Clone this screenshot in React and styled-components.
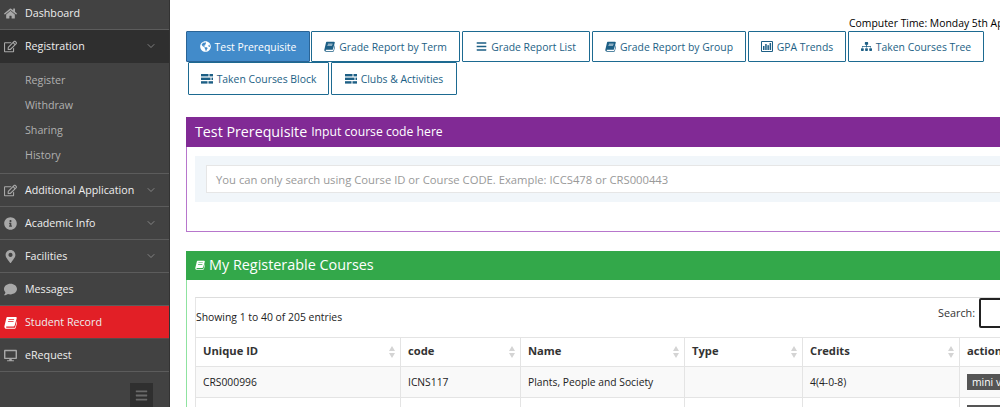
import React from 'react';
import styled, { createGlobalStyle } from 'styled-components';
import {
  FaHome, FaRegEdit, FaInfoCircle, FaMapMarkerAlt, FaComment, FaDesktop, FaGlobeAmericas,
  FaBars, FaSitemap,
} from 'react-icons/fa';
import { LuChevronDown } from 'react-icons/lu';

const Global = createGlobalStyle`
  html, body { margin: 0; padding: 0; height: 407px; overflow: hidden; background: #fff; }
  body { font-family: "Open Sans", "Noto Sans", sans-serif; }
  * { box-sizing: border-box; }
`;

const Page = styled.div`
  display: flex;
  width: 1000px;
  height: 407px;
  overflow: hidden;
`;

const Sidebar = styled.nav`
  position: relative;
  flex: 0 0 170px;
  height: 407px;
  background: #424242;
  border-right: 1px solid #333;
  overflow: hidden;
`;

const NavRow = styled.div`
  display: flex;
  align-items: center;
  height: 33px;
  padding: 0 12px 0 3px;
  font-size: 10.7px;
  color: #eee;
  background: ${p => (p.$bg === 'dark' ? '#2f2f2f' : p.$bg === 'red' ? '#e21f26' : 'transparent')};
  border-bottom: 1px solid ${p => (p.$bg === 'dark' ? '#2f2f2f' : p.$bg === 'red' ? '#5a4a4a' : '#5c5c5c')};
  &:first-child { height: 30px; padding-bottom: 3px; }
`;

const NavIcon = styled.span`
  display: flex;
  flex: none;
  justify-content: center;
  width: 15px;
  margin-right: 7px;
  font-size: 13px;
  color: ${p => (p.$white ? '#fff' : '#a8a8a8')};
`;

const NavLabel = styled.span`
  flex: 1;
  white-space: nowrap;
`;

const Caret = styled(LuChevronDown)`
  flex: none;
  font-size: 12px;
  color: #9a9a9a;
  stroke-width: 1.5;
`;

const SubMenu = styled.div`
  padding: 5px 0;
  border-bottom: 1px solid #5c5c5c;
`;

const SubItem = styled.div`
  height: 25px;
  line-height: 25px;
  padding-left: 25px;
  font-size: 10.7px;
  color: #b0b0b0;
`;

const Toggle = styled.div`
  position: absolute;
  left: 130px;
  top: 383px;
  width: 23px;
  height: 24px;
  display: flex;
  align-items: center;
  justify-content: center;
  background: #2f2f2f;
  color: #6a6a6a;
  font-size: 13px;
`;

const Main = styled.main`
  flex: 1;
  min-width: 0;
  padding-left: 16px;
  overflow: hidden;
`;

const TimeLine = styled.div`
  height: 31px;
  padding: 16px 0 0 663px;
  font-size: 10.4px;
  line-height: 15px;
  color: #000;
  white-space: nowrap;
`;

const Tabs = styled.div`
  display: flex;
  flex-wrap: wrap;
  width: 800px;
  padding-left: 2px;
  column-gap: 2px;
  height: 64px;
  align-content: flex-start;
`;

const Tab = styled.div`
  display: flex;
  align-items: center;
  justify-content: center;
  width: ${p => p.$w}px;
  height: ${p => (p.$low ? 33 : 31)}px;
  margin-left: ${p => (p.$active ? -2 : 0)}px;
  margin-right: ${p => (p.$active ? -1 : 0)}px;
  border: 1px solid ${p => (p.$active ? '#2a6496' : '#1d6a91')};
  border-radius: 1px;
  background: ${p => (p.$active ? '#428bca' : '#fff')};
  color: ${p => (p.$active ? '#fff' : '#1d5f85')};
  font-size: 10.4px;
  white-space: nowrap;
  svg { margin-right: 4px; font-size: 11px; }
`;

const Panel = styled.section`
  width: 830px;
  margin-top: ${p => p.$top}px;
  height: ${p => p.$h}px;
  border: 1px solid ${p => p.$border};
  border-width: 0 0 ${p => (p.$closed ? 1 : 0)}px 1px;
`;

const PanelHead = styled.header`
  display: flex;
  align-items: center;
  height: ${p => p.$h}px;
  margin-left: -1px;
  padding: 0 0 2px 9px;
  background: ${p => p.$bg};
  color: #fff;
  font-size: ${p => p.$size}px;
  white-space: nowrap;
  small { margin-left: 4px; font-size: 12.2px; }
  svg { margin-right: 4px; }
`;

const SearchBand = styled.div`
  margin: 9px 0 0 8px;
  height: 46px;
  padding: 9px 11px;
  background: #f1f6fa;
`;

const SearchInput = styled.div`
  height: 28px;
  line-height: 27px;
  padding-left: 9px;
  background: #fff;
  border: 1px solid #e6e6e6;
  font-size: 11.25px;
  color: #999;
  white-space: nowrap;
`;

const TableBox = styled.div`
  margin: 17px 0 0 8px;
  border-top: 1px solid #ddd;
  border-left: 1px solid #e6e6e6;
  width: 860px;
`;

const TableTools = styled.div`
  display: flex;
  height: 39px;
  font-size: 10.4px;
  color: #222;
`;

const Showing = styled.div`
  width: 742px;
  padding-top: 12px;
  line-height: 15px;
`;

const SearchLabel = styled.label`
  display: flex;
  align-items: flex-start;
  line-height: 30px;
  font-size: 10.8px;
  color: #333;
  i {
    width: 40px;
    height: 30px;
    margin-left: 4px;
    border: 2px solid #222;
    border-radius: 2px;
  }
`;

const Table = styled.table`
  table-layout: fixed;
  border-collapse: collapse;
  width: 864px;
  margin-left: -1px;
  font-size: 10.3px;
  color: #222;
`;

const Th = styled.th`
  position: relative;
  width: ${p => p.$w}px;
  height: 29px;
  padding: 0 7px 3px;
  text-align: left;
  font-size: 11.2px;
  font-weight: 700;
  color: #333;
  border: 1px solid #e4e4e4;
`;

const Sort = styled.span`
  position: absolute;
  right: 5px;
  top: 8px;
  display: flex;
  flex-direction: column;
  gap: 2px;
  &::before, &::after {
    content: '';
    border-left: 3px solid transparent;
    border-right: 3px solid transparent;
  }
  &::before { border-bottom: 5px solid #d4d4d4; }
  &::after { border-top: 5px solid #d4d4d4; }
`;

const Td = styled.td`
  height: 31px;
  padding: 0 7px 1px;
  border: 1px solid #e4e4e4;
  background: ${p => (p.$odd ? '#f9f9f9' : '#fff')};
  white-space: nowrap;
  overflow: hidden;
`;

const MiniBtn = styled.span`
  display: inline-block;
  padding: 0 5px;
  height: 16px;
  line-height: 16px;
  background: #555;
  color: #fff;
  font-size: 10.4px;
  white-space: nowrap;
`;

const BookIcon = ({ size = 11 }) => (
  <svg width={size} height={size} viewBox="0 0 14 14" fill="currentColor" aria-hidden="true" style={{ flex: 'none' }}>
    <path fillRule="evenodd" d="M3.6 1H12.7c.8 0 1.2.6 1 1.3l-2.2 7.8c-.2.7-.7 1.1-1.4 1.1H2.9c-.5 0-.8.2-.8.6 0 .5.4.8 1 .8h8.1c.4 0 .7-.2.8-.6l2.1-7.5.6.4-2 7.4c-.2.8-.8 1.4-1.7 1.4H2.7C1.4 13.7.4 12.8.4 11.5c0-.3 0-.5.1-.8l2-8.4C2.7 1.5 3 1 3.6 1zM5 3.5l-.2.8h6l.2-.8H5zm-.6 2.2-.2.8h6l.2-.8h-6z" />
  </svg>
);

const ChartIcon = () => (
  <svg width="12" height="11" viewBox="0 0 12 11" fill="currentColor" aria-hidden="true" style={{ flex: 'none' }}>
    <path fillRule="evenodd" d="M1 0h10a1 1 0 0 1 1 1v9a1 1 0 0 1-1 1H1a1 1 0 0 1-1-1V1a1 1 0 0 1 1-1zm0 1v9h10V1H1z" />
    <rect x="2" y="5" width="1.5" height="4" />
    <rect x="4.2" y="3" width="1.5" height="6" />
    <rect x="6.4" y="4.2" width="1.5" height="4.8" />
    <rect x="8.6" y="2" width="1.5" height="7" />
  </svg>
);

const BlockIcon = () => (
  <svg width="12" height="10" viewBox="0 0 12 10" fill="currentColor" aria-hidden="true" style={{ flex: 'none' }}>
    <rect x="0" y="0" width="7.5" height="2.4" />
    <rect x="8.5" y="0" width="3.5" height="2.4" />
    <rect x="0" y="3.6" width="9.5" height="2.4" />
    <rect x="10.5" y="3.6" width="1.5" height="2.4" />
    <rect x="0" y="7.2" width="6.5" height="2.4" />
    <rect x="7.5" y="7.2" width="4.5" height="2.4" />
  </svg>
);

const rows1 = [
  { w: 124, icon: <FaGlobeAmericas />, label: 'Test Prerequisite', active: true },
  { w: 149, icon: <BookIcon />, label: 'Grade Report by Term' },
  { w: 128, icon: <FaBars />, label: 'Grade Report List' },
  { w: 154, icon: <BookIcon />, label: 'Grade Report by Group' },
  { w: 98, icon: <ChartIcon />, label: 'GPA Trends' },
  { w: 136, icon: <FaSitemap />, label: 'Taken Courses Tree' },
];
const rows2 = [
  { w: 141, icon: <BlockIcon />, label: 'Taken Courses Block' },
  { w: 126, icon: <BlockIcon />, label: 'Clubs & Activities' },
];

const columns = [
  ['Unique ID', 205], ['code', 120], ['Name', 164], ['Type', 118], ['Credits', 157], ['action', 100],
];

export default function App() {
  return (
    <Page>
      <Global />
      <Sidebar>
        <NavRow><NavIcon><FaHome /></NavIcon><NavLabel>Dashboard</NavLabel></NavRow>
        <NavRow $bg="dark"><NavIcon><FaRegEdit /></NavIcon><NavLabel>Registration</NavLabel><Caret /></NavRow>
        <SubMenu>
          <SubItem>Register</SubItem>
          <SubItem>Withdraw</SubItem>
          <SubItem>Sharing</SubItem>
          <SubItem>History</SubItem>
        </SubMenu>
        <NavRow><NavIcon><FaRegEdit /></NavIcon><NavLabel>Additional Application</NavLabel><Caret /></NavRow>
        <NavRow><NavIcon><FaInfoCircle /></NavIcon><NavLabel>Academic Info</NavLabel><Caret /></NavRow>
        <NavRow><NavIcon><FaMapMarkerAlt /></NavIcon><NavLabel>Facilities</NavLabel><Caret /></NavRow>
        <NavRow><NavIcon><FaComment /></NavIcon><NavLabel>Messages</NavLabel></NavRow>
        <NavRow $bg="red"><NavIcon $white><BookIcon size={13} /></NavIcon><NavLabel>Student Record</NavLabel></NavRow>
        <NavRow><NavIcon><FaDesktop /></NavIcon><NavLabel>eRequest</NavLabel></NavRow>
        <Toggle><FaBars /></Toggle>
      </Sidebar>
      <Main>
        <TimeLine>Computer Time: Monday 5th April 2021</TimeLine>
        <Tabs>
          {rows1.map(t => (
            <Tab key={t.label} $w={t.w} $active={t.active}>{t.icon}{t.label}</Tab>
          ))}
          {rows2.map(t => (
            <Tab key={t.label} $w={t.w} $low>{t.icon}{t.label}</Tab>
          ))}
        </Tabs>
        <Panel $top={22} $h={115} $border="#b776cc" $closed>
          <PanelHead $h={30} $size={14.25} $bg="#812a95">Test Prerequisite<small>Input course code here</small></PanelHead>
          <SearchBand>
            <SearchInput>You can only search using Course ID or Course CODE. Example: ICCS478 or CRS000443</SearchInput>
          </SearchBand>
        </Panel>
        <Panel $top={19} $h={160} $border="#8fe3a0">
          <PanelHead $h={29} $size={14.4} $bg="#33a84a"><BookIcon size={10} />My Registerable Courses</PanelHead>
          <TableBox>
            <TableTools>
              <Showing>Showing 1 to 40 of 205 entries</Showing>
              <SearchLabel>Search:<i /></SearchLabel>
            </TableTools>
            <Table>
              <thead>
                <tr>
                  {columns.map(([name, w]) => (
                    <Th key={name} $w={w}>{name}{name !== 'action' && <Sort />}</Th>
                  ))}
                </tr>
              </thead>
              <tbody>
                <tr>
                  <Td $odd>CRS000996</Td>
                  <Td $odd>ICNS117</Td>
                  <Td $odd>Plants, People and Society</Td>
                  <Td $odd />
                  <Td $odd>4(4-0-8)</Td>
                  <Td $odd><MiniBtn>mini view</MiniBtn></Td>
                </tr>
                <tr>
                  <Td /><Td /><Td /><Td /><Td /><Td><MiniBtn>mini view</MiniBtn></Td>
                </tr>
              </tbody>
            </Table>
          </TableBox>
        </Panel>
      </Main>
    </Page>
  );
}
